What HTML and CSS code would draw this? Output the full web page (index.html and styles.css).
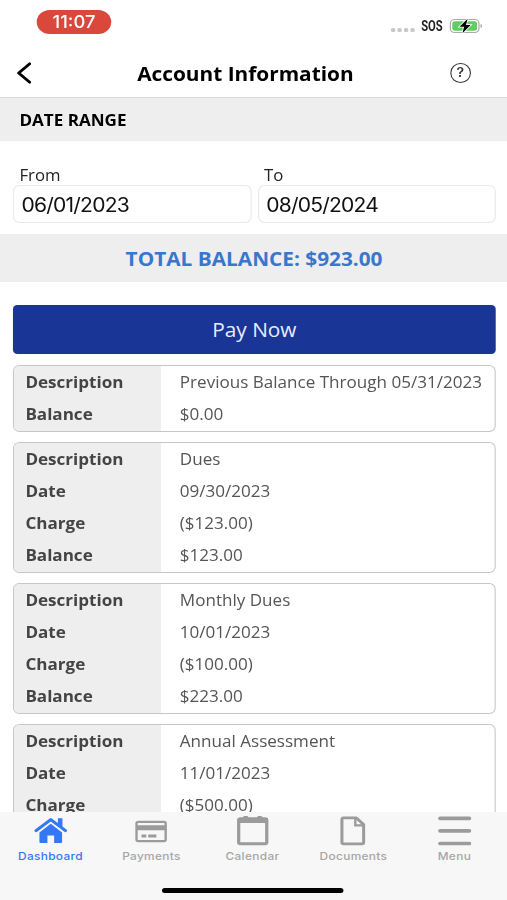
FILE: index.html
```html
<!DOCTYPE html>
<html lang="en">
<head>
    <meta charset="UTF-8">
    <meta name="viewport" content="width=device-width, initial-scale=1.0">
    <title>Account Information</title>
    <link rel="stylesheet" href="styles.css">
</head>
<body>
    <div class="screen">
        <div class="status-bar">
            <span class="time">11:07</span>
            <div class="status-icons">
                <div class="signal"><i></i><i></i><i></i><i></i></div>
                <span class="sos">SOS</span>
                <svg class="battery" width="31" height="16" viewBox="0 0 31 16">
                    <rect x="1" y="1.5" width="26.5" height="13" rx="4" fill="#fff" stroke="#aaa" stroke-width="1.1"/>
                    <rect x="2.8" y="3.2" width="22.9" height="9.6" rx="2.5" fill="#62cb62"/>
                    <path d="M29 6v4c1.6-.5 1.6-3.5 0-4z" fill="#999"/>
                    <path d="M17 .8L9.5 8.7h4.2L12.2 15.2 19.8 7h-4.3z" fill="#000" stroke="#fff" stroke-width="1.6" paint-order="stroke"/>
                </svg>
            </div>
        </div>

        <header class="header">
            <svg class="back" width="14" height="22" viewBox="0 0 14 22">
                <path d="M12.5 1.8L2.3 11l10.2 9.2" fill="none" stroke="#000" stroke-width="2.7" stroke-linecap="round" stroke-linejoin="round"/>
            </svg>
            <h1>Account Information</h1>
            <span class="help">?</span>
        </header>

        <h2 class="section-title">DATE RANGE</h2>

        <form class="date-range">
            <div class="field">
                <label for="from">From</label>
                <input type="text" id="from" name="from" value="06/01/2023">
            </div>
            <div class="field">
                <label for="to">To</label>
                <input type="text" id="to" name="to" value="08/05/2024">
            </div>
        </form>

        <div class="total">TOTAL BALANCE: $923.00</div>

        <main class="content">
            <button type="button" class="pay">Pay Now</button>

            <dl class="card">
                <dt>Description</dt><dd>Previous Balance Through 05/31/2023</dd>
                <dt>Balance</dt><dd>$0.00</dd>
            </dl>

            <dl class="card">
                <dt>Description</dt><dd>Dues</dd>
                <dt>Date</dt><dd>09/30/2023</dd>
                <dt>Charge</dt><dd>($123.00)</dd>
                <dt>Balance</dt><dd>$123.00</dd>
            </dl>

            <dl class="card">
                <dt>Description</dt><dd>Monthly Dues</dd>
                <dt>Date</dt><dd>10/01/2023</dd>
                <dt>Charge</dt><dd>($100.00)</dd>
                <dt>Balance</dt><dd>$223.00</dd>
            </dl>

            <dl class="card">
                <dt>Description</dt><dd>Annual Assessment</dd>
                <dt>Date</dt><dd>11/01/2023</dd>
                <dt>Charge</dt><dd>($500.00)</dd>
            </dl>
        </main>

        <footer class="footer">
            <nav class="tabs">
                <a class="tab active">
                    <svg width="32" height="32" viewBox="0 0 32 32">
                        <path d="M2.4 15.6L16 4.6l13.600 11" fill="none" stroke="currentColor" stroke-width="3" stroke-linecap="round" stroke-linejoin="round"/>
                        <path d="M22.6 3.2h4.200v9l-4.200-3.400z" fill="currentColor"/>
                        <path d="M16 8.8L5.5 17.400v9.600q0 1 1 1h6.400v-7.500h6.200V28h6.400q1 0 1-1v-9.600z" fill="currentColor"/>
                    </svg>
                    <span>Dashboard</span>
                </a>
                <a class="tab">
                    <svg width="32" height="32" viewBox="0 0 32 32">
                        <rect x="2.4" y="6.9" width="27" height="19.2" rx="1.6" fill="none" stroke="currentColor" stroke-width="2.2"/>
                        <path d="M2 10.300h28v5H2z" fill="currentColor"/>
                        <path d="M7 21h4.500M13.200 21h7.600" stroke="currentColor" stroke-width="2.8"/>
                    </svg>
                    <span>Payments</span>
                </a>
                <a class="tab">
                    <svg width="32" height="32" viewBox="0 0 32 32">
                        <rect x="3" y="3.8" width="26" height="25" rx="1.5" fill="none" stroke="currentColor" stroke-width="3"/>
                        <path d="M2 3h28v5H2zM7 2l1-1h3l1 1v2H7zM20 2l1-1h3l1 1v2h-5z" fill="currentColor"/>
                    </svg>
                    <span>Calendar</span>
                </a>
                <a class="tab">
                    <svg width="32" height="32" viewBox="0 0 32 32">
                        <path d="M7 2.900h12l6.700 6.600v18q0 1.400-1.400 1.400H7q-1.400 0-1.400-1.400V4.300Q5.600 2.900 7 2.900z" fill="none" stroke="currentColor" stroke-width="2.8" stroke-linejoin="round"/>
                        <path d="M18 3v7.400h7.600" fill="none" stroke="currentColor" stroke-width="2.2"/>
                    </svg>
                    <span>Documents</span>
                </a>
                <a class="tab">
                    <svg width="32" height="32" viewBox="0 0 32 32">
                        <path d="M2.500 3.300h27M2.500 15.800h27M2.500 28.500h27" stroke="currentColor" stroke-width="3.7" stroke-linecap="round"/>
                    </svg>
                    <span>Menu</span>
                </a>
            </nav>
            <div class="home-indicator"></div>
        </footer>
    </div>
</body>
</html>
```

FILE: styles.css
```css
* {
    box-sizing: border-box;
}

body {
    margin: 0;
    background: #fff;
    font-family: "Open Sans", "Noto Sans", sans-serif;
    overflow: hidden;
}

/* the wide app view: 469.5px of layout drawn over 507px */
.screen {
    display: flex;
    flex-direction: column;
    width: 469.5px;
    height: 900px;
    overflow: hidden;
    transform: scaleX(1.08);
    transform-origin: 0 0;
}

.status-bar {
    display: flex;
    justify-content: space-between;
    height: 49px;
    padding: 10px 23px 0 34px;
    flex-shrink: 0;
}

.time {
    width: 69px;
    height: 24px;
    border-radius: 12px;
    background: #d9483b;
    color: #fff;
    font: 500 17px/24px Inter, sans-serif;
    text-align: center;
}

.status-icons {
    display: flex;
    align-items: center;
    height: 32px;
}

.signal {
    display: flex;
    gap: 2px;
    margin: 8px 6px 0 0;
}

.signal i {
    width: 3.8px;
    height: 4px;
    border-radius: 1.5px;
    background: #c8c8c8;
}

.sos {
    width: 20px;
    margin-right: 6px;
    color: #222;
    font: 700 14px/16px Roboto, sans-serif;
    transform: scaleX(0.74);
    transform-origin: 0 0;
}

.header {
    display: grid;
    grid-template-columns: 30px 1fr 45px;
    align-items: center;
    height: 49px;
    padding: 0 15px;
    border-bottom: 1px solid #d9d9d9;
    flex-shrink: 0;
}

.header h1 {
    margin: 0;
    font-size: 19.3px;
    font-weight: 700;
    text-align: center;
}

.help {
    justify-self: end;
    width: 19.5px;
    height: 19.5px;
    margin-right: 18.5px;
    border: 1.7px solid #333;
    border-radius: 50%;
    color: #333;
    font: 600 13px/17px Inter, sans-serif;
    text-align: center;
}

.section-title {
    height: 43px;
    margin: 0;
    padding-left: 18px;
    background: #eee;
    font-size: 15.8px;
    font-weight: 700;
    line-height: 44px;
    flex-shrink: 0;
}

.date-range {
    display: flex;
    gap: 6px;
    height: 93px;
    padding: 24px 10.5px 0 12px;
    flex-shrink: 0;
}

.field {
    flex: 1;
    min-width: 0;
}

.field label {
    display: block;
    height: 20px;
    padding-left: 6px;
    color: #222;
    font-size: 15.5px;
    line-height: 20px;
}

.field input {
    display: block;
    width: 100%;
    height: 38px;
    padding: 2px 7px 0;
    border: 1px solid #e8e8e8;
    border-radius: 6px;
    color: #111;
    font: 19.5px Inter, sans-serif;
    letter-spacing: -0.75px;
}

.total {
    height: 48px;
    padding-left: 1px;
    background: #eee;
    color: #3a76cb;
    font-size: 19.25px;
    font-weight: 700;
    line-height: 49px;
    text-align: center;
    flex-shrink: 0;
}

.content {
    display: flex;
    flex-direction: column;
    flex: 1;
    min-height: 0;
    padding: 23px 10.5px 0 12px;
    overflow: hidden;
}

.pay {
    height: 48.5px;
    margin-bottom: 11.7px;
    border: none;
    border-radius: 4px;
    background: #193595;
    color: #e8edff;
    font: 19.3px "Open Sans", sans-serif;
    flex-shrink: 0;
}

.card {
    display: grid;
    grid-template-columns: 135.5px 1fr;
    grid-auto-rows: 32.2px;
    margin: 0 0 10.3px;
    border: 1.4px solid #c6c6c6;
    border-radius: 6px;
    overflow: hidden;
    flex-shrink: 0;
}

.card dt,
.card dd {
    margin: 0;
    color: #555;
    font-size: 15.8px;
    line-height: 33px;
    white-space: nowrap;
}

.card dt {
    padding-left: 10.5px;
    background: #eee;
    color: #444;
    font-weight: 700;
}

.card dd {
    padding-left: 18px;
}

.footer {
    display: flex;
    flex-direction: column;
    align-items: center;
    height: 88px;
    padding-right: 2px;
    background: #f7f7f7;
    flex-shrink: 0;
}

.tabs {
    display: flex;
    width: 100%;
    height: 75.5px;
}

.tab {
    display: flex;
    flex: 1;
    flex-direction: column;
    align-items: center;
    padding-top: 3px;
    color: #9b9b9b;
    font: 500 11px/14px Inter, sans-serif;
    letter-spacing: 0.3px;
}

.tab span {
    margin-top: 2px;
    color: #a6a6a6;
}

.tab.active,
.tab.active span {
    color: #3478f6;
}

.home-indicator {
    width: 168px;
    height: 5.5px;
    border-radius: 3px;
    background: #000;
}
```
